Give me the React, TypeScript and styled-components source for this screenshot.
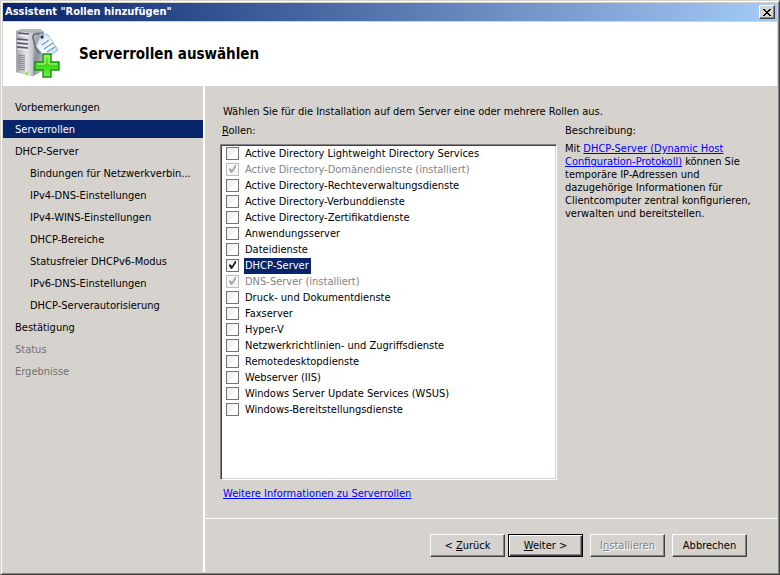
import React, { useState } from "react";
import styled, { createGlobalStyle, css } from "styled-components";

const GlobalStyle = createGlobalStyle`
  *, *::before, *::after { box-sizing: border-box; }
  body {
    margin: 0;
    background: #d6d3ce;
    color: #000;
    font: 11px/16px "DejaVu Sans Condensed", Tahoma, "DejaVu Sans", sans-serif;
  }
`;

const Window = styled.div`
  min-height: 100vh;
  display: flex;
  flex-direction: column;
  padding: 2px;
  background: #d6d3ce;
  border: 1px solid;
  border-color: #d6d3ce #424142 #424142 #d6d3ce;
  box-shadow: inset 1px 1px #fff, inset -1px -1px #848284;
`;

const TitleBar = styled.header`
  display: flex;
  align-items: center;
  justify-content: space-between;
  height: 18px;
  margin-bottom: 1px;
  padding: 0 2px;
  color: #fff;
  font-weight: bold;
  background: linear-gradient(to right, #08246b, #a5cbf7);
`;

const CloseButton = styled.button`
  display: grid;
  place-items: center;
  width: 16px;
  height: 14px;
  padding: 0;
  background: #d6d3ce;
  border: 1px solid;
  border-color: #fff #424142 #424142 #fff;
  box-shadow: inset -1px -1px #848284;
`;

const Banner = styled.div`
  display: flex;
  align-items: center;
  gap: 16px;
  height: 64px;
  padding: 0 12px;
  background: #fff;
`;

const Heading = styled.h1`
  margin: 0;
  font-size: 15px;
  line-height: 20px;
`;

const Body = styled.div`
  flex: 1;
  display: flex;
`;

const Steps = styled.nav`
  flex: 0 0 202px;
  min-width: 0;
  display: flex;
  flex-direction: column;
  gap: 4px;
  padding-top: 12px;
  border-right: 2px solid #fff;
`;

type StepState = "normal" | "current" | "pending";

const Step = styled.a<{ $state: StepState; $nested: boolean }>`
  padding: 2px 12px 0;
  padding-left: ${(p) => (p.$nested ? 27 : 12)}px;
  color: inherit;
  text-decoration: none;
  white-space: nowrap;
  ${(p) => p.$state === "current" && css`background: #08246b; color: #fff;`}
  ${(p) => p.$state === "pending" && css`color: #737173;`}
`;

const Page = styled.main`
  flex: 1;
  min-width: 0;
  display: flex;
  flex-direction: column;
`;

const Content = styled.div`
  flex: 1;
  display: flex;
  flex-direction: column;
  padding: 18px 20px 16px 15px;
`;

const Intro = styled.p`
  margin: 0 3px 3px;
`;

const Columns = styled.div`
  flex: 1;
  display: grid;
  grid-template-columns: minmax(0, 337fr) minmax(0, 192fr);
  gap: 8px;
`;

const ListColumn = styled.div`
  display: flex;
  flex-direction: column;
`;

const ListLabel = styled.div`
  margin: 0 2px 5px;
`;

const RoleList = styled.ul`
  flex: 1;
  margin: 0 0 6px;
  padding: 1px 4px 0;
  list-style: none;
  background: #fff;
  border: 1px solid;
  border-color: #848284 #fff #fff #848284;
  box-shadow: inset 1px 1px #424142, inset -1px -1px #d6d3ce;
`;

const RoleRow = styled.label<{ $disabled: boolean }>`
  display: flex;
  align-items: flex-start;
  gap: 5px;
  height: 16px;
  padding-left: 1px;
  color: ${(p) => (p.$disabled ? "#848284" : "#000")};
`;

const CheckHolder = styled.span`
  display: grid;
  width: 13px;
  height: 13px;
  margin-top: 1px;
  > * { grid-area: 1 / 1; }
  > svg { pointer-events: none; }
`;

const CheckInput = styled.input`
  appearance: none;
  width: 13px;
  height: 13px;
  margin: 0;
  border: 1px solid #737173;
  background: linear-gradient(135deg, #efebef 0%, #f7f3f7 50%, #fff 51%);
  &:disabled { border-color: #bdbabd; background: #f7f7f7; }
`;

const RoleName = styled.span<{ $selected: boolean }>`
  padding: 0 2px 0 1px;
  white-space: nowrap;
  ${(p) => p.$selected && css`background: #08246b; color: #fff;`}
`;

const Link = styled.a`
  color: #00f;
  text-decoration: underline;
`;

const MoreLink = styled(Link)`
  align-self: flex-start;
  margin-left: 3px;
`;

const DescriptionText = styled.p`
  margin: 3px 0 0;
  line-height: 13px;
`;

const Footer = styled.footer`
  display: flex;
  justify-content: flex-end;
  gap: 7px;
  padding: 15px 30px;
  border-top: 1px solid #fff;
`;

const Button = styled.button<{ $primary?: boolean }>`
  width: 75px;
  height: 23px;
  padding: 1px 0 0;
  font: inherit;
  color: #000;
  background: #d6d3ce;
  border: 1px solid;
  border-color: #fff #424142 #424142 #fff;
  box-shadow: inset -1px -1px #848284;
  &:disabled { color: #848284; text-shadow: 1px 1px #fff; }
  ${(p) => p.$primary && css`
    border-color: #000;
    box-shadow: inset 1px 1px #fff, inset -1px -1px #424142, inset -2px -2px #848284;
  `}
`;

const ButtonPair = styled.div`
  display: flex;
  gap: 3px;
`;

const ServerIcon = () => (
  <svg width="48" height="52" viewBox="0 0 48 52" aria-hidden="true">
    <defs>
      <linearGradient id="front" x1="0" x2="1"><stop stopColor="#a3a5ab" /><stop offset="0.6" stopColor="#e4e5e9" /><stop offset="1" stopColor="#c4c6cb" /></linearGradient>
      <linearGradient id="side" x1="0" x2="1" y2="1"><stop stopColor="#c5c7cb" /><stop offset="0.45" stopColor="#8d8f97" /><stop offset="1" stopColor="#d6d8dc" /></linearGradient>
      <linearGradient id="tag" x1="0" x2="1" y2="1"><stop stopColor="#c5dcf2" /><stop offset="0.55" stopColor="#fafdff" /><stop offset="1" stopColor="#9fc0df" /></linearGradient>
      <linearGradient id="plus" x2="0" y2="1"><stop stopColor="#8df03f" /><stop offset="0.5" stopColor="#3cd51e" /><stop offset="1" stopColor="#79ef43" /></linearGradient>
    </defs>
    <path d="m1 3 6-2h18l4 3v38l-11 6L1 44z" fill="#9a9ca3" />
    <path d="m1 3 6-2h18l4 3-11 1z" fill="#b6b8be" />
    <path d="m1 3 17 2v43L1 44z" fill="url(#front)" />
    <path d="m18 5 11-1v38l-11 6z" fill="url(#side)" />
    <path d="m3 5 11 1M2 11l11 1M2 15l11 1M2 19l11 1" stroke="#555862" strokeWidth="1.6" />
    <path d="m3 7 11 1M2 13l11 1M2 17l11 1M2 21l11 1" stroke="#f1f2f4" />
    <path d="m3 27 7 1m-7 1 7 1m-7 1 7 1m-7 1 7 1m-7 1 7 1m-7 1 7 1m-7 1 7 1m-7 1 7 1" stroke="#777a84" strokeWidth="0.9" />
    <circle cx="11.5" cy="45.5" r="1.6" fill="#78f51d" />
    <path d="M27 7c-5-3-10-1-9 3l3 11c1 3 5 5 8 3" fill="none" stroke="#666a73" strokeWidth="1.5" />
    <path d="m24 11 1-5 8 1 10 15-12 9-10-13z" fill="url(#tag)" stroke="#9ab8d6" />
    <circle cx="27" cy="9" r="1.7" fill="#303b48" />
    <path d="m27 17 7-5m-5 9 9-6m-6 9 8-5" stroke="#7799c8" strokeWidth="1.4" />
    <path d="M28 26h8v8h8v8h-8v7h-8v-7h-8v-8h8z" fill="url(#plus)" stroke="#159414" strokeWidth="1.4" />
    <path d="M22 36h8v-8h4v8h8" fill="none" stroke="#b8fa83" />
  </svg>
);

const steps: { name: string; state?: StepState; nested?: boolean }[] = [
  { name: "Vorbemerkungen" },
  { name: "Serverrollen", state: "current" },
  { name: "DHCP-Server" },
  { name: "Bindungen für Netzwerkverbin...", nested: true },
  { name: "IPv4-DNS-Einstellungen", nested: true },
  { name: "IPv4-WINS-Einstellungen", nested: true },
  { name: "DHCP-Bereiche", nested: true },
  { name: "Statusfreier DHCPv6-Modus", nested: true },
  { name: "IPv6-DNS-Einstellungen", nested: true },
  { name: "DHCP-Serverautorisierung", nested: true },
  { name: "Bestätigung" },
  { name: "Status", state: "pending" },
  { name: "Ergebnisse", state: "pending" },
];

const roles: { name: string; installed?: boolean }[] = [
  { name: "Active Directory Lightweight Directory Services" },
  { name: "Active Directory-Domänendienste (installiert)", installed: true },
  { name: "Active Directory-Rechteverwaltungsdienste" },
  { name: "Active Directory-Verbunddienste" },
  { name: "Active Directory-Zertifikatdienste" },
  { name: "Anwendungsserver" },
  { name: "Dateidienste" },
  { name: "DHCP-Server" },
  { name: "DNS-Server (installiert)", installed: true },
  { name: "Druck- und Dokumentdienste" },
  { name: "Faxserver" },
  { name: "Hyper-V" },
  { name: "Netzwerkrichtlinien- und Zugriffsdienste" },
  { name: "Remotedesktopdienste" },
  { name: "Webserver (IIS)" },
  { name: "Windows Server Update Services (WSUS)" },
  { name: "Windows-Bereitstellungsdienste" },
];

export default function App() {
  const [checked, setChecked] = useState<string[]>(["DHCP-Server"]);
  const [selected, setSelected] = useState("DHCP-Server");

  const toggle = (name: string) => {
    setSelected(name);
    setChecked((c) => (c.includes(name) ? c.filter((n) => n !== name) : [...c, name]));
  };

  return (
    <>
      <GlobalStyle />
      <Window>
        <TitleBar>
          <span>Assistent "Rollen hinzufügen"</span>
          <CloseButton aria-label="Schließen">
            <svg width="8" height="7" viewBox="0 0 8 7" shapeRendering="crispEdges">
              <path d="M0 0h2v1h1v1h2V1h1V0h2v1H7v1H6v1H5v1h1v1h1v1h1v1H6V6H5V5H3v1H2v1H0V6h1V5h1V4h1V3H2V2H1V1H0z" />
            </svg>
          </CloseButton>
        </TitleBar>
        <Banner>
          <ServerIcon />
          <Heading>Serverrollen auswählen</Heading>
        </Banner>
        <Body>
          <Steps>
            {steps.map((s) => (
              <Step key={s.name} href="#" $state={s.state ?? "normal"} $nested={!!s.nested}>
                {s.name}
              </Step>
            ))}
          </Steps>
          <Page>
            <Content>
              <Intro>Wählen Sie für die Installation auf dem Server eine oder mehrere Rollen aus.</Intro>
              <Columns>
                <ListColumn>
                  <ListLabel id="roles-label"><u>R</u>ollen:</ListLabel>
                  <RoleList aria-labelledby="roles-label">
                    {roles.map((r) => {
                      const on = !!r.installed || checked.includes(r.name);
                      return (
                        <li key={r.name}>
                          <RoleRow $disabled={!!r.installed}>
                            <CheckHolder>
                              <CheckInput type="checkbox" checked={on} disabled={r.installed} onChange={() => toggle(r.name)} />
                              {on && (
                                <svg width="13" height="13" viewBox="0 0 13 13">
                                  <path d="m3 6 1-1 2 2 3-5h1v2L6 10H5L3 7z" fill={r.installed ? "#a5a2a5" : "#212021"} />
                                </svg>
                              )}
                            </CheckHolder>
                            <RoleName $selected={selected === r.name}>{r.name}</RoleName>
                          </RoleRow>
                        </li>
                      );
                    })}
                  </RoleList>
                  <MoreLink href="#">Weitere Informationen zu Serverrollen</MoreLink>
                </ListColumn>
                <section>
                  <div>Beschreibung:</div>
                  <DescriptionText>
                    Mit <Link href="#">DHCP-Server (Dynamic Host Configuration-Protokoll)</Link> können Sie temporäre
                    IP-Adressen und dazugehörige Informationen für Clientcomputer zentral konfigurieren, verwalten und
                    bereitstellen.
                  </DescriptionText>
                </section>
              </Columns>
            </Content>
            <Footer>
              <ButtonPair>
                <Button>&lt; <u>Z</u>urück</Button>
                <Button $primary><u>W</u>eiter &gt;</Button>
              </ButtonPair>
              <Button disabled>I<u>n</u>stallieren</Button>
              <Button>Abbrechen</Button>
            </Footer>
          </Page>
        </Body>
      </Window>
    </>
  );
}
